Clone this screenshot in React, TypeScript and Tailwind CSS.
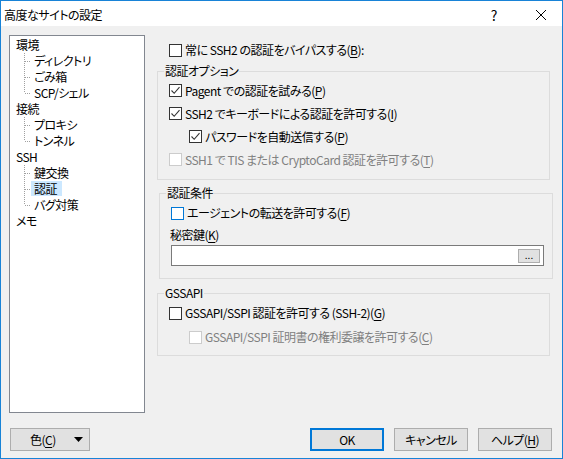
import type { ReactNode } from "react";

type CheckProps = {
  checked?: boolean;
  disabled?: boolean;
  focus?: boolean;
};

const Check = ({ checked, disabled, focus }: CheckProps) => {
  const border = disabled
    ? "border-[#cccccc]"
    : focus
      ? "border-[#0078d7]"
      : "border-[#333333]";
  return (
    <span
      className={`w-[13px] h-[13px] border bg-white flex items-center justify-center shrink-0 ${border}`}
    >
      {checked && (
        <svg width="11" height="11" viewBox="0 0 11 11">
          <path d="M1.5 5.5 L4.2 8.3 L9.5 2.2" stroke="#333" strokeWidth="1.1" fill="none" />
        </svg>
      )}
    </span>
  );
};

const Key = ({ k }: { k: string }) => (
  <>
    (<span className="underline underline-offset-2">{k}</span>)
  </>
);

type RowProps = CheckProps & {
  children: ReactNode;
  className?: string;
};

const CheckRow = ({ children, className = "h-[23px]", ...box }: RowProps) => (
  <div className={`flex items-center gap-[3px] ${className}`}>
    <Check {...box} />
    <span className={box.disabled ? "text-[#808080]" : ""}>{children}</span>
  </div>
);

type TreeItem = { label: string; child?: boolean; last?: boolean; selected?: boolean };

const tree: TreeItem[] = [
  { label: "環境" },
  { label: "ディレクトリ", child: true },
  { label: "ごみ箱", child: true },
  { label: "SCP/シェル", child: true, last: true },
  { label: "接続" },
  { label: "プロキシ", child: true },
  { label: "トンネル", child: true, last: true },
  { label: "SSH" },
  { label: "鍵交換", child: true },
  { label: "認証", child: true, selected: true },
  { label: "バグ対策", child: true, last: true },
  { label: "メモ" },
];

const Legend = ({ children }: { children: ReactNode }) => (
  <legend className="ml-[6px] px-[1px] leading-[16px]">{children}</legend>
);

export default function App() {
  return (
    <div className="w-[563px] h-[459px] border border-[#1883d7] bg-[#f0f0f0] flex flex-col font-['Noto_Sans_CJK_JP',sans-serif] [font-feature-settings:'palt'] text-[12px] leading-[16px] tracking-[-0.5px] text-black">
      {/* Title bar */}
      <div className="h-[25px] bg-white flex items-center pl-[3px] shrink-0">
        <span className="pt-[2px]">高度なサイトの設定</span>
        <span className="ml-auto text-[14px] pt-[2px]">?</span>
        <svg className="ml-[39px] mr-[16px] mt-[2px]" width="10" height="10" viewBox="0 0 10 10">
          <path d="M0 0 L10 10 M10 0 L0 10" stroke="#000" strokeWidth="1" />
        </svg>
      </div>

      <div className="flex-1 flex flex-col px-[8px] pt-[9px]">
        <div className="flex h-[378px]">
          {/* Tree */}
          <div className="w-[136px] h-full border border-[#828790] bg-white pt-[1px] shrink-0">
            {tree.map((item) =>
              item.child ? (
                <div key={item.label} className="flex h-[16px] pl-[14px]">
                  <svg width="7" height="16" viewBox="0 0 7 16" className="shrink-0">
                    <line
                      x1="0.5"
                      y1="0"
                      x2="0.5"
                      y2={item.last ? 8 : 16}
                      stroke="#a0a0a0"
                      strokeDasharray="1 1"
                    />
                    <line x1="1" y1="8.5" x2="7" y2="8.5" stroke="#a0a0a0" strokeDasharray="1 1" />
                  </svg>
                  <span
                    className={`pl-[3px] pr-[5px] h-[15px] leading-[16px] ${item.selected ? "bg-[#cce8ff]" : ""}`}
                  >
                    {item.label}
                  </span>
                </div>
              ) : (
                <div key={item.label} className="h-[16px] pl-[6px]">
                  {item.label}
                </div>
              )
            )}
          </div>

          {/* Settings */}
          <div className="ml-[12px] flex-1 flex flex-col pt-[3px]">
            <div className="pl-[12px]">
              <CheckRow className="h-[24px]">
                常に SSH2 の認証をバイパスする<Key k="B" />:
              </CheckRow>
            </div>

            <fieldset className="mt-[1px] w-[393px] border border-[#dcdcdc] p-0 m-0">
              <Legend>認証オプション</Legend>
              <div className="pl-[11px] pb-[8px]">
                <CheckRow checked>
                  Pagent での認証を試みる<Key k="P" />
                </CheckRow>
                <CheckRow checked>
                  SSH2 でキーボードによる認証を許可する<Key k="I" />
                </CheckRow>
                <CheckRow checked className="h-[23px] ml-[20px]">
                  パスワードを自動送信する<Key k="P" />
                </CheckRow>
                <CheckRow disabled>
                  SSH1 で TIS または CryptoCard 認証を許可する<Key k="T" />
                </CheckRow>
              </div>
            </fieldset>

            <fieldset className="mt-[5px] ml-[2px] w-[394px] border border-[#dcdcdc] p-0 m-0">
              <Legend>認証条件</Legend>
              <div className="pl-[11px] pb-[12px]">
                <CheckRow focus className="h-[24px]">
                  エージェントの転送を許可する<Key k="F" />
                </CheckRow>
                <div className="h-[20px] flex items-center -ml-[1px]">
                  秘密鍵<Key k="K" />
                </div>
                <div className="w-[373px] h-[21px] border border-[#7a7a7a] bg-white flex items-center justify-end pr-[3px]">
                  <button className="w-[22px] h-[14px] bg-[#e1e1e1] border border-[#adadad] flex items-center justify-center text-[10px] leading-[10px] tracking-normal pb-[2px]">
                    ...
                  </button>
                </div>
              </div>
            </fieldset>

            <fieldset className="mt-[6px] w-[393px] border border-[#dcdcdc] p-0 m-0">
              <Legend>GSSAPI</Legend>
              <div className="pl-[11px] pb-[6px]">
                <CheckRow className="h-[24px]">
                  GSSAPI/SSPI 認証を許可する (SSH-2)<Key k="G" />
                </CheckRow>
                <CheckRow disabled className="h-[24px] ml-[20px]">
                  GSSAPI/SSPI 証明書の権利委譲を許可する<Key k="C" />
                </CheckRow>
              </div>
            </fieldset>
          </div>
        </div>

        {/* Buttons */}
        <div className="flex mt-[15px] h-[23px]">
          <button className="ml-[1px] w-[80px] h-full bg-[#e1e1e1] border border-[#adadad] flex items-center pl-[19px] pr-[6px]">
            <span>
              色<Key k="C" />
            </span>
            <svg className="ml-auto" width="9" height="5" viewBox="0 0 9 5">
              <path d="M0 0 L9 0 L4.5 5 Z" fill="#000" />
            </svg>
          </button>
          <div className="ml-auto mr-[2px] flex gap-[10px]">
            <button className="w-[74px] h-full bg-[#e1e1e1] border-2 border-[#0078d7] flex items-center justify-center">
              OK
            </button>
            <button className="w-[74px] h-full bg-[#e1e1e1] border border-[#adadad] flex items-center justify-center">
              キャンセル
            </button>
            <button className="w-[74px] h-full bg-[#e1e1e1] border border-[#adadad] flex items-center justify-center">
              ヘルプ<Key k="H" />
            </button>
          </div>
        </div>
      </div>
    </div>
  );
}
